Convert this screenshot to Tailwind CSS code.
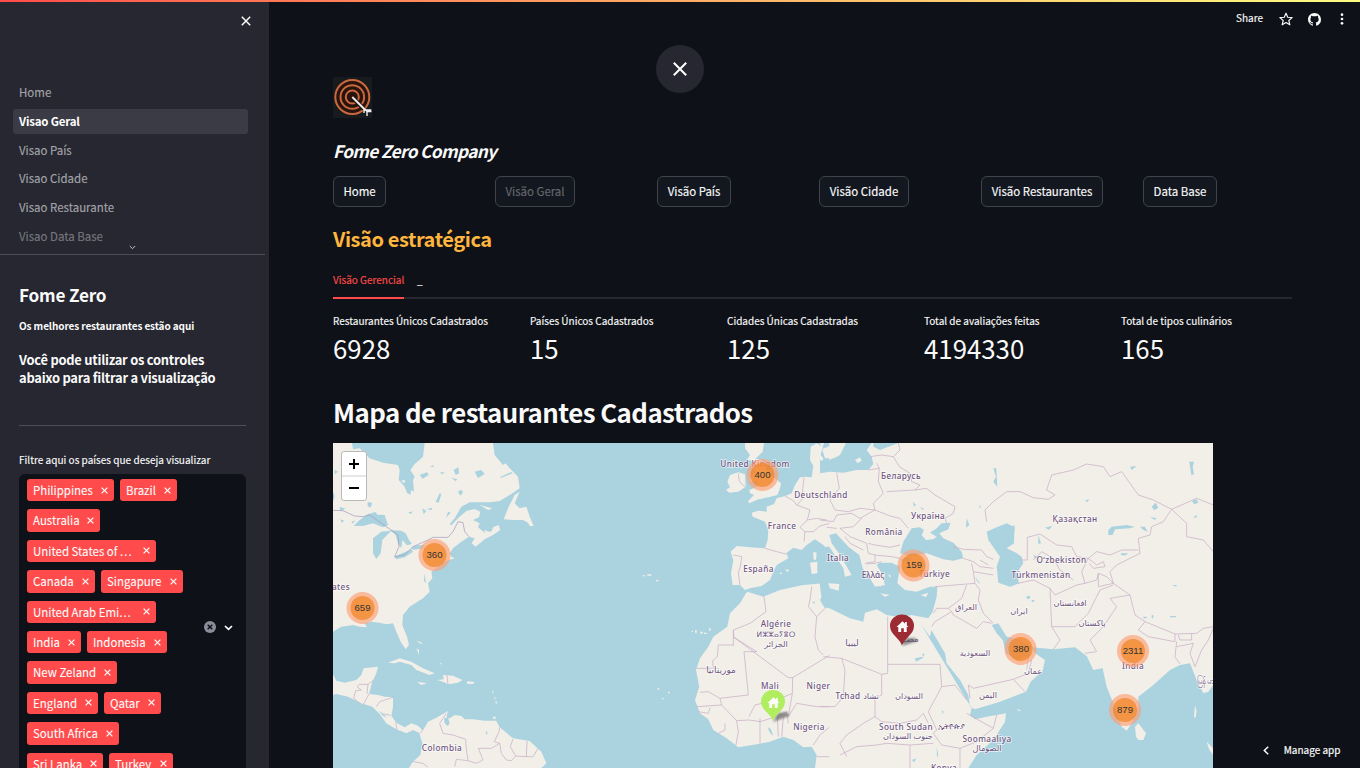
<!DOCTYPE html>
<html lang="pt">
<head>
<meta charset="utf-8">
<title>Visao Geral</title>
<script src="https://cdn.jsdelivr.net/npm/@tailwindcss/browser@4"></script>
</head>
<body class="relative h-[768px] w-[1360px] overflow-hidden bg-[#0e1117] font-['Noto_Sans_CJK_SC','Noto_Sans',sans-serif] text-[11.46px] text-[#fafafa]">
<div class="absolute inset-x-0 top-0 z-10 h-[2px] bg-linear-to-r from-[#ff4b4b] to-[#fffd80]"></div>
<div class="flex h-full">
  <aside class="flex h-full w-[269px] shrink-0 flex-col overflow-hidden bg-[#262730]">
    <div class="flex h-[78px] shrink-0 justify-end pt-[16px] pr-[18px]">
      <svg class="size-[10px]" viewBox="0 0 10 10" stroke="#fafafa" stroke-width="1.5" fill="none"><path d="M.8.8l8.4 8.4M9.2.8L.8 9.2"/></svg>
    </div>
    <nav class="relative mr-[4px] h-[177px] shrink-0 border-b border-[#4c4d55] pt-[2px] pl-[13px] leading-[25px] text-[#a3a4a9] [-webkit-text-stroke:0.15px]">
      <div class="mb-[4px] h-[25px] pl-[6px]">Home</div>
      <div class="mb-[4px] h-[25px] w-[235px] rounded-[3px] bg-[#3b3b46] pl-[6px] font-bold tracking-[-0.18px] text-white [-webkit-text-stroke:0]">Visao Geral</div>
      <div class="mb-[3px] h-[25px] pl-[6px]">Visao País</div>
      <div class="mb-[4px] h-[25px] pl-[6px]">Visao Cidade</div>
      <div class="mb-[4px] h-[25px] pl-[6px]">Visao Restaurante</div>
      <div class="h-[25px] pl-[6px] text-[#77787e]">Visao Data Base</div>
      <svg class="absolute top-[167px] left-[129px] h-[5px] w-[7px]" viewBox="0 0 7 5" stroke="#c4c4c8" fill="none"><path d="M.8 1l2.7 2.7L6.2 1"/></svg>
    </nav>
    <div class="flex shrink-0 flex-col pl-[19px]">
      <h2 class="mt-[26px] h-[28px] text-[17.2px] leading-[28px] font-bold tracking-[-0.2px] whitespace-nowrap">Fome Zero</h2>
      <p class="mt-[8px] h-[18px] text-[10px] leading-[18px] font-bold tracking-[-0.1px] whitespace-nowrap">Os melhores restaurantes estão aqui</p>
      <p class="mt-[16px] h-[36px] text-[12.9px] leading-[18px] font-bold tracking-[-0.24px] whitespace-nowrap">Você pode utilizar os controles<br>abaixo para filtrar a visualização</p>
      <div class="mt-[38px] h-px w-[227px] bg-[#4c4d55]"></div>
      <p class="mt-[25px] h-[18px] text-[10px] leading-[18px] tracking-[0.02px] whitespace-nowrap [-webkit-text-stroke:0.15px]">Filtre aqui os países que deseja visualizar</p>
      <div class="mt-[5px] flex h-[310px] w-[227px] shrink-0 items-center rounded-[6px] bg-[#0e1117] pl-[8px]">
        <div class="flex h-full w-[162px] flex-col gap-[8px] pt-[5px] leading-[22.4px] whitespace-nowrap [-webkit-text-stroke:0.1px] [&_span]:flex [&_span]:h-[22.4px] [&_span]:items-center [&_span]:justify-between [&_span]:rounded-[3px] [&_span]:bg-[#ff4b4b] [&_span]:pr-[6.5px] [&_span]:pl-[6px] [&_div]:flex [&_div]:gap-[6px] [&_svg]:size-[7px] [&_svg]:fill-none [&_svg]:stroke-white [&_svg]:stroke-[1.2]">
          <div><span class="w-[87px]">Philippines<svg viewBox="0 0 7 7"><path d="M.6.6l5.8 5.8M6.4.6L.6 6.4"/></svg></span><span class="w-[57px]">Brazil<svg viewBox="0 0 7 7"><path d="M.6.6l5.8 5.8M6.4.6L.6 6.4"/></svg></span></div>
          <div><span class="w-[73px]">Australia<svg viewBox="0 0 7 7"><path d="M.6.6l5.8 5.8M6.4.6L.6 6.4"/></svg></span></div>
          <div><span class="w-[129px]"><b class="font-normal">United States of <i class="tracking-[1px] not-italic">...</i></b><svg viewBox="0 0 7 7"><path d="M.6.6l5.8 5.8M6.4.6L.6 6.4"/></svg></span></div>
          <div><span class="w-[68px]">Canada<svg viewBox="0 0 7 7"><path d="M.6.6l5.8 5.8M6.4.6L.6 6.4"/></svg></span><span class="w-[82px]">Singapure<svg viewBox="0 0 7 7"><path d="M.6.6l5.8 5.8M6.4.6L.6 6.4"/></svg></span></div>
          <div><span class="w-[129px]"><b class="font-normal">United Arab Emi<i class="tracking-[1px] not-italic">...</i></b><svg viewBox="0 0 7 7"><path d="M.6.6l5.8 5.8M6.4.6L.6 6.4"/></svg></span></div>
          <div><span class="w-[54px]">India<svg viewBox="0 0 7 7"><path d="M.6.6l5.8 5.8M6.4.6L.6 6.4"/></svg></span><span class="w-[80px]">Indonesia<svg viewBox="0 0 7 7"><path d="M.6.6l5.8 5.8M6.4.6L.6 6.4"/></svg></span></div>
          <div><span class="w-[90px]">New Zeland<svg viewBox="0 0 7 7"><path d="M.6.6l5.8 5.8M6.4.6L.6 6.4"/></svg></span></div>
          <div><span class="w-[71px]">England<svg viewBox="0 0 7 7"><path d="M.6.6l5.8 5.8M6.4.6L.6 6.4"/></svg></span><span class="w-[57px]">Qatar<svg viewBox="0 0 7 7"><path d="M.6.6l5.8 5.8M6.4.6L.6 6.4"/></svg></span></div>
          <div><span class="w-[92px]">South Africa<svg viewBox="0 0 7 7"><path d="M.6.6l5.8 5.8M6.4.6L.6 6.4"/></svg></span></div>
          <div><span class="w-[76px]">Sri Lanka<svg viewBox="0 0 7 7"><path d="M.6.6l5.8 5.8M6.4.6L.6 6.4"/></svg></span><span class="w-[64px]">Turkey<svg viewBox="0 0 7 7"><path d="M.6.6l5.8 5.8M6.4.6L.6 6.4"/></svg></span></div>
        </div>
        <svg class="ml-[14.5px] size-[12px] -translate-y-[2px]" viewBox="0 0 12 12"><circle cx="6" cy="6" r="6" fill="#8b8d99"/><path d="M3.7 3.7l4.6 4.6M8.3 3.7L3.7 8.3" stroke="#0e1117" stroke-width="1.5"/></svg>
        <svg class="ml-[8px] h-[6px] w-[9px] -translate-y-[1px]" viewBox="0 0 9 6" fill="none" stroke="#fff" stroke-width="1.7"><path d="M1 1l3.500 3.400L8 1"/></svg>
      </div>
    </div>
  </aside>

  <main class="flex min-w-0 flex-1 flex-col pl-[64px]">
    <header class="flex h-[38px] items-center justify-end pr-[15px] text-[10px] [-webkit-text-stroke:0.15px]">
      <span class="mr-[16px] -translate-y-[2px]">Share</span>
      <svg class="mr-[15px] size-[14px]" viewBox="0 0 24 24" fill="none" stroke="#fafafa" stroke-width="2" stroke-linejoin="round"><path d="M12 2l3 7 7.500.6-5.700 4.900 1.800 7.400L12 18l-6.600 3.900 1.800-7.400L1.500 9.600 9 9z"/></svg>
      <svg class="mr-[18px] size-[13px]" viewBox="0 0 16 16" fill="#fafafa"><path d="M8 0C3.580 0 0 3.580 0 8c0 3.540 2.290 6.530 5.470 7.590.4.070.55-.17.55-.38 0-.19-.01-.82-.01-1.490-2.010.37-2.530-.49-2.690-.94-.09-.23-.48-.94-.82-1.130-.28-.15-.68-.52-.01-.53.63-.01 1.080.58 1.230.82.72 1.210 1.870.87 2.330.66.07-.52.28-.87.51-1.070-1.780-.2-3.640-.89-3.640-3.950 0-.87.31-1.590.82-2.150-.08-.2-.36-1.020.08-2.120 0 0 .67-.21 2.200.82.64-.18 1.320-.27 2-.27s1.360.09 2 .27c1.530-1.040 2.200-.82 2.200-.82.44 1.100.16 1.920.08 2.120.51.56.82 1.270.82 2.150 0 3.070-1.870 3.750-3.650 3.950.29.25.54.73.54 1.480 0 1.070-.01 1.930-.01 2.200 0 .21.15.46.55.38A8 8 0 0016 8c0-4.420-3.580-8-8-8z"/></svg>
      <svg class="h-[12px] w-[6px]" viewBox="0 0 6 12" fill="#fafafa"><circle cx="3" cy="1.700" r="1.350"/><circle cx="3" cy="6" r="1.350"/><circle cx="3" cy="10.300" r="1.350"/></svg>
    </header>
    <svg class="mt-[39px] h-[41px] w-[39px] shrink-0" viewBox="0 0 39 41" fill="none">
      <rect width="39" height="41" fill="#171b1e"/><circle cx="19.300" cy="20" r="17.800" fill="#28130d"/>
      <g stroke="#c9683f" stroke-width="2"><circle cx="19.300" cy="20" r="17"/><circle cx="19.300" cy="20" r="11.800"/><circle cx="19.300" cy="20" r="6.500"/></g>
      <path d="M20 21l11 11" stroke="#28130d" stroke-width="4.500"/><path d="M19.300 20l13 13" stroke="#eee" stroke-width="1.900"/><path d="M30.500 31l4 4M31 36l.300-4.500M32.300 33h6M34 39v-4.500h4.500" stroke="#eee" stroke-width="1.400"/>
    </svg>
    <h3 class="mt-[19px] h-[28px] text-[17.200px] leading-[28px] font-bold tracking-[-0.600px] italic">Fome Zero Company</h3>
    <div class="mt-[11px] flex h-[31px] leading-[29px] whitespace-nowrap [-webkit-text-stroke:0.15px] [&_button]:block [&_button]:h-[31px] [&_button]:rounded-[6px] [&_button]:border [&_button]:border-[#41434a] [&_button]:bg-[#131720] [&>div]:w-[162px]">
      <div><button class="w-[53px]">Home</button></div>
      <div><button class="w-[80px] text-[#66686d]">Visão Geral</button></div>
      <div><button class="w-[74px]">Visão País</button></div>
      <div><button class="w-[90px]">Visão Cidade</button></div>
      <div><button class="w-[122px]">Visão Restaurantes</button></div>
      <div><button class="w-[74px]">Data Base</button></div>
    </div>
    <h3 class="mt-[15px] h-[34px] text-[20px] leading-[34px] font-bold tracking-[-0.420px] text-[#ffb53e]">Visão estratégica</h3>
    <div class="mt-[14px] flex h-[29px] w-[959px] border-b-2 border-[#262730] text-[10px] leading-[20px] [-webkit-text-stroke:0.15px]">
      <div class="mr-[13px] h-[29px] w-[71px] border-b-2 border-[#ff4b4b] whitespace-nowrap text-[#ff4b4b]">Visão Gerencial</div>
      <div>_</div>
    </div>
    <div class="mt-[13px] flex h-[56px] whitespace-nowrap [&>div]:w-[197px] [&_p]:h-[18px] [&_p]:text-[10px] [&_p]:leading-[18px] [&_p]:[-webkit-text-stroke:0.15px] [&_strong]:-mt-px [&_strong]:block [&_strong]:h-[38px] [&_strong]:text-[25.800px] [&_strong]:leading-[38px] [&_strong]:font-normal">
      <div><p>Restaurantes Únicos Cadastrados</p><strong>6928</strong></div>
      <div><p>Países Únicos Cadastrados</p><strong>15</strong></div>
      <div><p>Cidades Únicas Cadastradas</p><strong>125</strong></div>
      <div><p>Total de avaliações feitas</p><strong>4194330</strong></div>
      <div><p>Total de tipos culinários</p><strong>165</strong></div>
    </div>
    <h2 class="mt-[24px] h-[40px] text-[25.800px] leading-[40px] font-bold tracking-[-0.530px] whitespace-nowrap">Mapa de restaurantes Cadastrados</h2>
    <div class="mt-[11px] flex">
    <section class="relative h-[325px] w-[880px] shrink-0 overflow-hidden bg-[#aad3df]">
      <svg class="absolute inset-0 h-[325px] w-[880px]" viewBox="333 443 880 325">
        <defs>
          <filter id="soft" x="-50%" y="-50%" width="200%" height="200%"><feGaussianBlur stdDeviation="1"/></filter>
          <g id="house"><path d="M-6 .6L0-5.200l2.600 2.500v-1.800h1.700v3.400L6 .6H4.200v4.800H1.300V1.800h-2.600v3.600h-2.900V.6z" fill="#fff"/></g>
          <g id="pin"><path d="M0 31C-2 24-12 20-12 11.500A12 11.500 0 0 1 12 11.500C12 20 2 24 0 31z"/></g>
        </defs>
        <!-- Americas -->
        <g transform="translate(333 440) scale(.33333)">
          <g fill="#f2efe9">
            <path d="M0 9H57L60 28 80 25 100 45 110 55 150 68 195 75 200 90 197 120 215 140 222 158 232 165 234 150 243 155 240 120 245 110 232 90 245 72 270 50 275 9H480L485 45 510 75 518 70 530 85 555 110 560 145 535 162 500 183 470 187 410 187 385 200 365 235 350 252 355 256 375 235 400 213 425 207 442 215 438 232 420 240 440 250 435 262 455 278 475 280 480 262 497 255 502 270 480 285 455 298 428 320 416 310 425 295 408 290 385 305 360 325 350 340 355 350 365 355 340 362 310 385 295 395 298 415 285 430 290 455 270 475 230 500 210 525 208 555 222 590 228 615 218 628 203 605 190 575 180 550 160 553 140 548 115 545 95 550 102 562 80 560 60 555 25 560 0 575z"/>
            <path d="M0 703L10 722 35 728 70 720 85 705 92 685 135 680 130 700 118 725 108 762 135 765 155 770 180 772 180 800 175 828 190 848 215 862 235 850 255 857 270 872 262 880 240 870 220 880 190 868 160 850 140 822 118 800 85 790 45 770 10 762 0 765z"/>
            <path d="M258 875L272 868 285 845 310 833 345 813 340 835 350 835 365 825 385 828 395 838 420 838 455 842 490 842 500 862 540 895 590 903 625 935 640 970 625 984H228L240 965 262 945 268 910z"/>
            <path d="M165 668L200 655 235 665 270 685 305 700 290 705 250 690 235 675 200 665 185 670z"/>
            <path d="M312 720L332 718 330 705 360 707 388 720 375 728 345 733 330 725zM402 724L425 726 420 732 402 731zM252 725L282 730 265 735zM560 155L545 190 560 205 580 200 590 230 602 258 590 258 585 248 570 240 540 240 512 238 525 205 545 165zM440 195L478 205 465 210zM455 270L470 276 485 268 480 282 455 278zM250 625L258 630 258 645zM250 602L268 608 264 612zM203 122L217 120 214 130z"/>
            <path d="M478 752h3v8h-3zM484 770h3v8h-3zM488 783h3v8h-3zM480 830h8v6h-8zM320 670h6v3h-6z"/>
          </g>
          <g fill="#aad3df">
            <path d="M62 258L80 240 105 222 128 216 133 224 155 225 165 255 150 262 120 250 90 258zM120 295L145 275 175 272 162 285 148 300 143 340 130 357 120 340z"/>
            <path d="M170 270L205 272 218 280 228 300 237 312 222 316 208 300 205 325 195 310 188 285zM183 350L235 328 240 335 215 352 190 358zM235 322L250 316 275 315 270 325 240 330zM0 155L5 168 0 185zM104 185L118 190 112 203 104 198zM20 200L38 206 22 214zM333 835L345 833 350 850 344 858 335 850zM138 812L152 822 162 834 148 826z"/>
            <path d="M260 105l22-8 5 7-18 12zM308 185l12-25 5 3-8 25zM362 90l14-8 2 18-10 5zM425 95l20-5 10 12-20 12zM500 112l35-16 4 4-34 13zM375 155l10-6 5 8-8 10zM322 95l14 3-10 5zM355 113l18 5-5 6zM228 35l15 5-4 15-10-3zM345 215l8 3-14 15zM280 208l18-5-2 7zM290 80l12-4v5zM268 205l12 8-8 10zM225 218l14-4-5 8zM22 238l12 4-8 6zM55 246l12-5-8 10zM5 90l10 5-10 8zM275 400l4 30-6-8zM458 872l6 6-4 8z"/>
          </g>
          <g fill="none" stroke="#c8aec6" stroke-width="2.200">
            <path d="M0 211L30 212 65 228 90 230 110 225 160 260 195 285 198 320 185 350 215 345 240 320 285 300 300 292 345 292 360 275 375 245 390 248 395 275 408 290" stroke="#a49dbd"/>
            <path d="M80 790L62 775 68 752 85 750 72 740 80 733 105 733 120 722M105 733L102 762M92 792L108 762M130 800L140 785 180 772M152 822L172 826M192 868L188 848M262 880L270 868M342 706L345 733"/>
            <path d="M340 820L320 850 330 880 360 885 398 898 400 925 405 962 370 958 365 980M240 965L270 970 285 982M405 962L430 970 450 960 436 925 475 925 500 910 484 905 498 875 500 862M500 910L505 940 520 960 535 962 548 948 532 920 540 897M548 948L580 950 582 903M580 950L600 950 615 925"/>
          </g>
        </g>
        <!-- Western Europe and Africa -->
        <g transform="translate(630 440) scale(.33333)">
          <g fill="#f2efe9">
            <path d="M300 105L325 97 345 103 347 140 325 155 298 158 288 150 300 142 292 125zM345 9H402L398 35 375 58 395 60 410 95 435 115 453 130 450 145 442 165 415 172 385 178 358 190 354 184 372 165 360 160 358 150 382 140 384 125 358 122 375 95 370 65 352 58 360 45 345 25z"/>
            <path d="M600 75L590 70 585 85 575 75 580 55 572 45 578 22 560 10 542 20 540 60 550 78 545 112 525 110 510 112 495 135 485 160 465 168 440 175 432 192 410 200 410 215 385 212 365 218 368 230 405 245 415 270 413 300 405 325 360 322 320 318 302 335 310 360 303 400 308 435 330 435 345 450 360 445 395 438 420 420 430 395 440 375 475 355 470 338 490 323 515 330 530 315 555 298 580 315 600 340z"/>
            <path d="M600 430L580 430 520 435 450 450 400 470 352 455 348 460 330 490 300 520 292 560 250 590 235 620 210 655 198 690 208 740 195 780 210 820 235 838 250 870 290 895 325 922 385 912 420 905 460 890 490 900 520 922 545 920 560 945 555 984H610V500L585 505 570 480 585 455z"/>
            <path d="M550 335L560 338 558 360 550 358zM540 368L562 365 562 400 545 402zM465 388L478 390 472 397zM450 398h6v4h-6zM236 565h6v8h-4zM210 575h8v6h-6zM195 570h5v10h-4zM222 578h8v4h-8zM185 572h4v4h-4zM38 406h8v3h-8zM52 403h12v4H52zM78 420h8v4h-8zM82 745h6v4h-6zM114 755h5v5h-5zM95 775h6v3h-6zM600 20L580 25 590 45 600 50z"/>
          </g>
          <g fill="#aad3df"><path d="M414 862l8 5 8 20-8-6-6-10zM548 485h6v5h-6z"/></g>
          <g fill="none" stroke="#c8aec6" stroke-width="2.200">
            <path d="M405 325L440 335 472 343M310 345L335 350 332 375 325 400 330 435M325 100L328 125 345 140M465 168L490 182 500 195 540 210 532 240 510 262 525 275 522 305M500 195L515 180 522 112M532 240L560 235 590 240M525 275L550 275 570 258 600 250"/>
            <path d="M402 470L408 515 360 550 310 570 312 592 475 713 488 713 600 645M312 615H265L262 650 248 662 250 685H200M310 570V615M312 592L380 635H342L355 765 270 775 235 755 210 757M545 440L540 480 535 500 560 530 555 590 565 630 580 645M560 530L585 505M488 713L487 760 440 780 375 795 357 830M487 760L475 830M475 830L500 790 560 800 600 800M442 830L445 890M460 832L455 890M390 835V910M320 842L325 875 318 915M357 840L390 845 440 830M270 775L275 795 200 800M240 803L235 820 205 815M275 795L320 842 357 840M285 850L285 870 265 880M600 860L570 885 550 915M560 950H600M440 830L470 815 475 850"/>
          </g>
        </g>
        <!-- Eastern Europe, Middle East and South Asia -->
        <g transform="translate(820 440) scale(.33333)">
          <path fill="#f2efe9" d="M28 9H1190V984H28z"/>
          <g fill="#aad3df">
            <path d="M0 60L20 65 45 50 60 25 75 9H155L140 30 155 50 160 72 145 90 110 90 70 98 30 95 0 100zM160 20L180 30 235 9 225 0 160 5z"/>
            <path d="M0 320L28 320 70 385 75 410 95 405 60 345 35 310 28 285 48 280 85 320 118 345 128 385 150 415 165 440 195 435 185 400 170 375 180 368 215 368 240 380 235 410 232 430 255 450 290 455 330 440 352 440 350 470 338 515 325 535 275 525 240 532 200 525 170 508 135 518 130 545 90 535 50 515 8 495 0 440z"/>
            <path d="M275 265L300 262 312 270 305 285 318 300 340 298 350 290 330 278 350 265 365 250 392 248 385 268 358 280 370 295 400 308 425 335 430 355 400 362 370 358 320 340 270 348 240 340 250 305zM240 358L270 352 275 362 245 365z"/>
            <path d="M500 275L530 262 560 250 583 262 582 310 560 325 588 338 605 350 610 370 590 400 597 430 570 440 535 428 530 380 540 350 505 300zM570 257l14 0 0 20-14 8z"/>
            <path d="M303 553L330 590 334 570 375 640 380 670 420 720 445 765 450 800 465 808 540 785 618 755 632 725 668 692 675 660 645 640 632 615 625 645 590 660 558 640 548 600 530 580 515 555 535 550 560 590 600 600 635 622 700 628 765 622 800 648 820 690 848 685 860 740 880 790 905 860 920 872 935 850 955 800 955 770 1000 735 1050 690 1080 675 1110 670 1130 720 1150 760 1165 755 1180 735V984H445L470 945 520 900 555 845 558 820 500 830 465 838 450 825 455 805z"/>
            <path d="M865 270L875 260 920 255 945 260 930 265 885 268 878 285 865 285zM960 260h15l8 15-12-4zM903 340h22l-8 6h-14zM995 200l12-12 8 15-12 8zM990 230l20 5-6 5zM1115 182l15-4 5 10-12 5zM1108 65l14 0-4 15 4 22-8 4zM1120 232l12-8-4 10zM285 655l25-5-4-8 8-1-6 14-20 10zM520 85l8 25-8 15 12 15-3-55zM440 235l8 20-10 8zM475 205l8-10v6zM278 185l10 10-6 5zM298 200l14 6-3 4zM655 285l8 25-8 2zM675 263l22-6-10 12zM640 345l14 6-10 4zM620 468h10v8h-10zM635 480h8v5h-8zM1060 435h10v4h-10zM1050 528h18v4h-18zM970 530h10v5h-10zM995 525h5v10h-5zM795 182l12-5-4 10zM930 80l20-2-15 12zM350 920l5 25-4 8zM365 810l6 5-3 8zM275 960l14-5-6 12zM465 410l12 15 4 8-10-10z"/>
          </g>
          <g fill="#f2efe9">
            <path d="M0 9L12 9 5 30 45 9H78L60 45 42 55 15 55zM105 60l15-8 5 10-12 8zM25 430L58 432 56 452 30 445zM302 465L325 458 318 472zM180 460L210 465 195 470zM205 402l8 5-4 6zM175 390l12 14 8-2-4 20-10 18-14-8z"/>
            <path d="M955 850L978 880 970 900 955 900 948 890 945 860zM1160 905L1180 925V945L1168 930zM1125 795l5 20-4 20-4-5zM590 808l15 3-10 2zM560 890l5 8-5 2z"/>
          </g>
          <g fill="none" stroke="#c8aec6" stroke-width="2.200">
            <path d="M50 98L58 145 30 180 45 210 85 215 120 205 165 210 160 190 190 160 175 125 178 85 145 90M150 50L185 45 220 50 240 30 235 9M178 85L170 70M220 50L238 80 270 100 275 125 300 135 285 150 200 155M285 150L320 145 345 165 405 200 400 220 375 235 380 250M165 210L210 228 240 235 265 265M0 240L40 245 50 225 95 220 120 235 165 210M50 265L20 262M60 265L100 260 125 235M60 265L90 290 140 310 145 340 165 345 165 365 135 370M75 290L90 310 130 330M165 315L210 322 240 315M165 345L215 350 240 355M185 365L165 370 140 372M145 310L165 315"/>
            <path d="M400 320L430 328 485 330 500 350 520 358M430 355L460 365 480 380 520 385M480 360L505 375M455 370L460 395 490 400 520 405M460 395L465 430 345 440M440 435L425 475 385 505 350 505 340 520M385 505L395 515 345 545 335 560M395 515L400 525 470 565 490 545 515 550M465 430L480 450 475 480 490 520 520 550"/>
            <path d="M203 530V673H360M203 673V700L185 703V765L165 775 165 830M185 703L65 655 10 650M65 655L75 690 70 770 45 800 0 800M165 830L130 850 80 885 60 910 80 950M165 830L185 845 240 850 290 840 310 820 325 850M360 673L365 740 325 815 350 870 340 880M365 740L405 735 440 780M340 880L365 915 420 925 470 905 520 865 440 820M60 945L110 920 170 915 200 910 270 915 270 984M270 915L340 910M420 925V984M530 825L520 865M445 735L460 745 580 718 615 755M580 718L625 700 635 660M445 735L450 775"/>
            <path d="M630 615L620 690M500 245L495 210 520 185 560 155 600 155 640 173 685 178 705 165 680 150 695 105 760 90 800 72 850 80 870 110 905 95 955 165 1000 180 1055 208 1130 175 1180 195M1055 208L1030 245 995 260 990 285 955 295 960 340 930 355 890 375 870 395 880 430M622 360V292L660 282 710 315 755 320 770 350 805 355 830 335 870 345 905 330 955 330M622 360H600M640 360L665 335 700 355 720 390 760 420M805 355L830 375 850 365 855 380 820 385 808 370M805 355L785 395 795 430 830 420 835 400 860 410 880 430 835 440 835 400M595 430L640 420 690 445 705 465 770 435 795 430M690 445L695 560 765 560 805 520 840 450 880 435M880 430L930 465 945 525 975 545 1065 582 1130 580 1150 565 1180 560M930 465L870 475 890 500 850 560 810 600 830 635 795 640M695 560L720 600 700 628M975 545L955 570 985 590 1065 605 1065 582M1055 208L1100 250 1100 290 1150 300 1180 335M1075 585L1080 600H1115V580M1070 605L1065 650 1080 672M1070 620L1120 610 1110 640 1125 680 1145 630 1165 600 1180 565"/>
          </g>
        </g>
        <g font-family="Noto Sans, DejaVu Sans, sans-serif" font-size="8.200" font-weight="500" fill="#6f5580" stroke="#fff" stroke-opacity=".7" stroke-width="1.500" paint-order="stroke" text-anchor="middle" letter-spacing=".4">
          <text x="341" y="590">ates</text><text x="442" y="751">Colombia</text>
          <text x="755" y="466.500">United Kingdom</text><text x="821" y="498">Deutschland</text><text x="782" y="528.500">France</text><text x="758.500" y="572">España</text><text x="838" y="561">Italia</text>
          <text x="901" y="479">Беларусь</text><text x="928" y="519">Україна</text><text x="884" y="534.500">România</text><text x="873" y="578" letter-spacing="0">Ελλάς</text><text x="934.500" y="577">Türkiye</text>
          <text x="776" y="627">Algérie</text><text x="776" y="637" letter-spacing="0" font-size="7.500">ⵍⵣⵣⴰⵢⴻⵔ</text><text x="776" y="647" letter-spacing="0">الجزائر</text>
          <text x="721" y="673" letter-spacing="0" font-size="9">موريتانيا</text><text x="852" y="646" letter-spacing="0" font-size="9">ليبيا</text><text x="910" y="642" letter-spacing="0" font-size="9">مصر</text>
          <text x="770" y="689">Mali</text><text x="818.500" y="689">Niger</text><text x="809" y="729.500">Nigeria</text><text x="848" y="699">Tchad</text><text x="871" y="699" letter-spacing="0">تشاد</text><text x="909" y="699" letter-spacing="0">السودان</text>
          <text x="906" y="729.500">South Sudan</text><text x="908" y="739" letter-spacing="0">جنوب السودان</text><text x="951" y="729" letter-spacing="0">ኢትዮጵያ</text><text x="987" y="742">Soomaaliya</text><text x="987" y="751" letter-spacing="0">الصومال</text><text x="944" y="770.500">Kenya</text>
          <text x="966" y="610" letter-spacing="0">العراق</text><text x="975" y="656" letter-spacing="0">السعودية</text><text x="988" y="698" letter-spacing="0">اليمن</text><text x="1033" y="674" letter-spacing="0">عمان</text><text x="1019" y="614" letter-spacing="0">ایران</text>
          <text x="1075" y="521.500">Қазақстан</text><text x="1061.500" y="563">Oʻzbekiston</text><text x="1041" y="577.500">Türkmenistan</text><text x="1070" y="606" letter-spacing="0">افغانستان</text><text x="1092" y="626" letter-spacing="0">پاکستان</text><text x="1133" y="669">India</text><text x="1197" y="684" text-anchor="start" letter-spacing="0">မြန်မာ</text>
        </g>
        <g fill="#555" opacity=".65" filter="url(#soft)"><path d="M902 646L906 638 915 638 918 641z"/><path d="M773 722L778 713 787 712 789 716z"/></g>
        <use href="#pin" x="902" y="614.500" fill="#9c2b33"/><use href="#house" x="902.500" y="626.500"/>
        <use href="#pin" x="773" y="690" fill="#b0ee5f"/><use href="#house" x="773.500" y="702.500"/>
        <g fill="#fd9c73" fill-opacity=".65"><circle cx="434.500" cy="555" r="16"/><circle cx="362.500" cy="608" r="16"/><circle cx="762.500" cy="475" r="16"/><circle cx="913.500" cy="565.500" r="16"/><circle cx="1020.500" cy="649" r="16"/><circle cx="1133" cy="651" r="16"/><circle cx="1125" cy="710" r="16"/></g>
        <g fill="#f18017" fill-opacity=".65"><circle cx="434.500" cy="555" r="12"/><circle cx="362.500" cy="608" r="12"/><circle cx="762.500" cy="475" r="12"/><circle cx="913.500" cy="565.500" r="12"/><circle cx="1020.500" cy="649" r="12"/><circle cx="1133" cy="651" r="12"/><circle cx="1125" cy="710" r="12"/></g>
        <g font-family="Liberation Sans, sans-serif" font-size="9.600" fill="#333" text-anchor="middle"><text x="434.500" y="558">360</text><text x="362.500" y="611">659</text><text x="762.500" y="478">400</text><text x="914" y="568">159</text><text x="1021" y="652">380</text><text x="1133" y="654">2311</text><text x="1125" y="713">879</text></g>
      </svg>
      <div class="absolute top-[8px] left-[8px] h-[50px] w-[26px] rounded-[3px] border border-[#b7bcba] bg-white">
        <svg class="h-[48px] w-[24px]" viewBox="0 0 24 48"><path d="M7 12h10M12 7v10M7 36h10" stroke="#000" stroke-width="2"/><path d="M0 24h24" stroke="#ccc"/></svg>
      </div>
    </section>
    <div class="flex h-[325px] flex-1 items-end justify-end pr-[19.500px] pb-[8px]">
      <div class="flex items-center gap-[15px] text-[10px] leading-[20px] whitespace-nowrap [-webkit-text-stroke:0.2px]"><svg class="h-[9px] w-[6px]" viewBox="0 0 6 9" fill="none" stroke="#fff" stroke-width="1.500"><path d="M5.200.7L1.300 4.500l3.900 3.800"/></svg>Manage app</div>
    </div>
    </div>
  </main>
</div>
<div class="absolute top-[45px] left-[656px] flex size-[48px] items-center justify-center rounded-full bg-[#262730]">
  <svg class="size-[14px]" viewBox="0 0 14 14" fill="none" stroke="#fff" stroke-width="2"><path d="M.8.8l12.400 12.400M13.200.8L.8 13.200"/></svg>
</div>
</body>
</html>
